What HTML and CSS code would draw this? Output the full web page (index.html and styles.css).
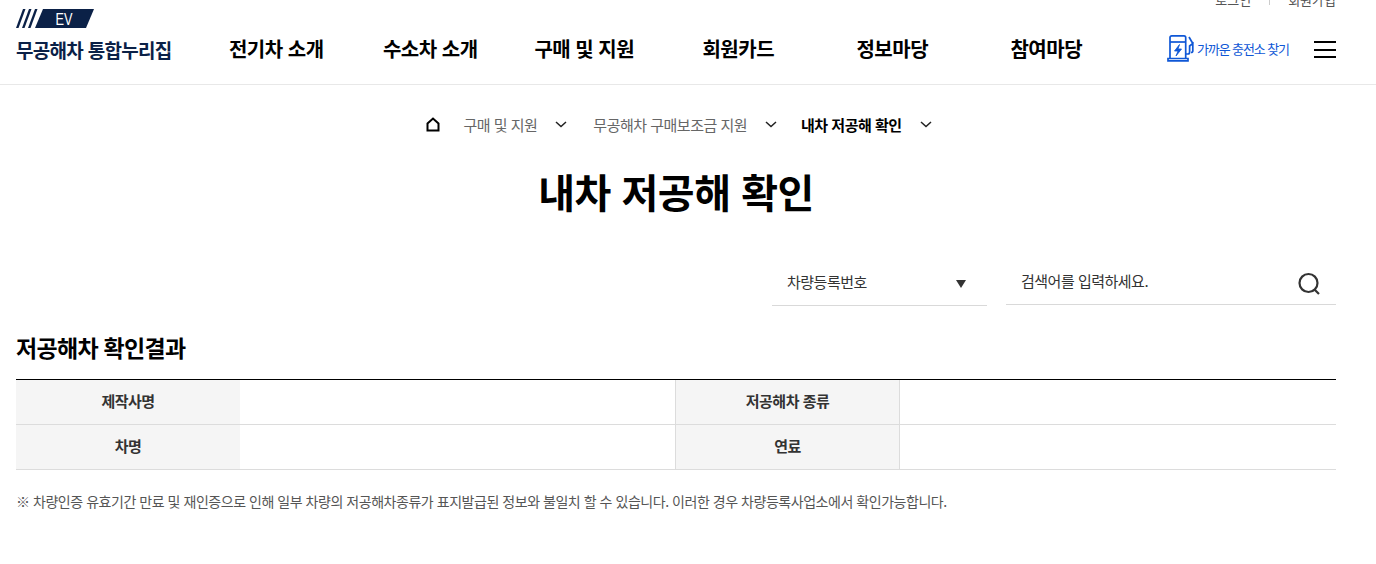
FILE: index.html
```html
<!DOCTYPE html>
<html lang="ko">
  <head>
    <meta charset="UTF-8">
    <meta name="viewport" content="width=device-width, initial-scale=1.0">
    <title>내차 저공해 확인</title>
    <link rel="stylesheet" href="styles.css">
  </head>
  <body>
    <header class="header">
      <div class="util">
        <a class="util-link">로그인</a>
        <span class="util-bar"></span>
        <a class="util-link">회원가입</a>
      </div>
      <div class="header-row">
        <a class="logo">
          <svg class="logo-mark" width="78" height="19" viewBox="0 0 78 19">
            <polygon points="0,19 7,0 9.5,0 2.5,19" fill="#0b2147"/>
            <polygon points="6,19 13,0 15.5,0 8.5,19" fill="#0b2147"/>
            <polygon points="12,19 19,0 21.5,0 14.5,19" fill="#0b2147"/>
            <polygon points="19,19 27,0 78,0 70,19" fill="#0b2147"/>
            <text x="39.5" y="15.5" class="logo-ev" textLength="17" lengthAdjust="spacingAndGlyphs">EV</text>
          </svg>
          <span class="logo-name">무공해차 통합누리집</span>
        </a>
        <nav class="gnb">
          <a class="gnb-item">전기차 소개</a>
          <a class="gnb-item">수소차 소개</a>
          <a class="gnb-item">구매 및 지원</a>
          <a class="gnb-item">회원카드</a>
          <a class="gnb-item">정보마당</a>
          <a class="gnb-item">참여마당</a>
        </nav>
        <a class="find">
          <svg class="find-icon" width="28" height="28" viewBox="0 0 28 28" fill="none" stroke="#0f57d6" stroke-width="1.7">
            <path d="M3 25V3.5C3 2.5 3.7 1.8 4.7 1.8H17C18 1.8 18.7 2.5 18.7 3.5V25"/>
            <path d="M1 26.8H21V24.5H1Z"/>
            <path d="M3 8H18.7"/>
            <path d="M12.5 10.5L7.5 17H11L9 22L14.5 15H11Z" fill="#0f57d6" stroke-width="0.8"/>
            <path d="M18.7 20H21C22 20 22.6 19 22.6 18V12L25.8 9.5V17C25.8 18 25 18.5 24 18.5"/>
            <path d="M22 3L25.8 9.5"/>
          </svg>
          <span class="find-text">가까운 충전소 찾기</span>
        </a>
        <button class="menu-btn"><span></span><span></span><span></span></button>
      </div>
    </header>

    <main class="content">
      <div class="crumbs">
        <svg class="crumb-home" width="14" height="15" viewBox="0 0 14 15" fill="none" stroke="#000" stroke-width="2">
          <path d="M1.5 13.5H12.5V6.5L7 1.5L1.5 6.5Z"/>
        </svg>
        <span class="crumb">구매 및 지원</span>
        <svg class="crumb-arrow" width="12" height="7" viewBox="0 0 12 7" fill="none" stroke="#222" stroke-width="1.5"><path d="M1 1L6 5.5L11 1"/></svg>
        <span class="crumb">무공해차 구매보조금 지원</span>
        <svg class="crumb-arrow" width="12" height="7" viewBox="0 0 12 7" fill="none" stroke="#222" stroke-width="1.5"><path d="M1 1L6 5.5L11 1"/></svg>
        <span class="crumb crumb-now">내차 저공해 확인</span>
        <svg class="crumb-arrow" width="12" height="7" viewBox="0 0 12 7" fill="none" stroke="#222" stroke-width="1.5"><path d="M1 1L6 5.5L11 1"/></svg>
      </div>

      <h1 class="page-title">내차 저공해 확인</h1>

      <div class="search">
        <div class="search-type">
          <span>차량등록번호</span>
          <i class="search-caret"></i>
        </div>
        <div class="search-box">
          <span>검색어를 입력하세요.</span>
          <svg class="search-icon" width="24" height="24" viewBox="0 0 24 24" fill="none" stroke="#333" stroke-width="2.2">
            <circle cx="11.5" cy="11" r="9"/>
            <path d="M17.5 17.5L22 22"/>
          </svg>
        </div>
      </div>

      <h2 class="result-title">저공해차 확인결과</h2>

      <div class="result-wrap">
        <table class="result">
          <tr>
            <th>제작사명</th>
            <td class="td-first"></td>
            <th class="th-mid">저공해차 종류</th>
            <td></td>
          </tr>
          <tr>
            <th>차명</th>
            <td></td>
            <th class="th-mid">연료</th>
            <td></td>
          </tr>
        </table>
      </div>

      <p class="note">※ 차량인증 유효기간 만료 및 재인증으로 인해 일부 차량의 저공해차종류가 표지발급된 정보와 불일치 할 수 있습니다. 이러한 경우 차량등록사업소에서 확인가능합니다.</p>
    </main>
  </body>
</html>
```

FILE: styles.css
```css
body {
    margin: 0;
    background-color: #fff;
    color: #000;
    font-family: "Noto Sans CJK KR", "Noto Sans", sans-serif;
    letter-spacing: -0.5px;
}

.header {
    height: 84px;
    border-bottom: 1px solid #e8e8e8;
    overflow: hidden;
}

.util {
    display: flex;
    justify-content: flex-end;
    align-items: center;
    gap: 18px;
    height: 18px;
    margin-top: -10px;
    padding-right: 40px;
    font-size: 13px;
    letter-spacing: 0;
    color: #555;
}

.util-bar {
    width: 1px;
    height: 11px;
    background-color: #ccc;
}

.header-row {
    display: flex;
    align-items: flex-start;
    padding-left: 16px;
    padding-top: 1px;
}

.logo {
    display: block;
    width: 183px;
}

.logo-mark {
    display: block;
}

.logo-ev {
    font-family: "Liberation Sans", sans-serif;
    font-size: 17px;
    letter-spacing: 0;
    fill: #fff;
}

.logo-name {
    display: block;
    margin-top: 8px;
    font-size: 19px;
    line-height: 27px;
    font-weight: 700;
    letter-spacing: -0.7px;
    white-space: nowrap;
    color: #0b2147;
}

.gnb {
    display: flex;
    width: 924px;
    padding-top: 21px;
}

.gnb-item {
    width: 154px;
    padding-left: 0.5px;
    text-align: center;
    font-size: 20px;
    line-height: 38px;
    font-weight: 700;
    white-space: nowrap;
}

.find {
    display: flex;
    align-items: center;
    gap: 2px;
    margin-left: 44px;
    padding-top: 25px;
}

.find-text {
    font-size: 13px;
    letter-spacing: -1.1px;
    white-space: nowrap;
    color: #0f57d6;
}

.menu-btn {
    display: flex;
    flex-direction: column;
    gap: 5.5px;
    width: 22px;
    margin-left: 25px;
    margin-top: 32px;
    padding: 0;
    background: none;
    border: none;
}

.menu-btn span {
    width: 22px;
    height: 2px;
    background-color: #000;
}

.content {
    padding: 0 40px 0 16px;
}

.crumbs {
    display: flex;
    justify-content: center;
    align-items: center;
    height: 78px;
    padding-left: 32px;
    font-size: 15px;
    color: #666;
}

.crumb-home {
    margin-right: 23px;
}

.crumb-arrow {
    margin: 0 26px 0 18px;
}

.crumb-now {
    margin-left: -2px;
    font-weight: 700;
    color: #000;
}

.page-title {
    margin: 0;
    height: 101px;
    font-size: 40px;
    line-height: 56px;
    font-weight: 700;
    text-align: center;
}

.search {
    display: flex;
    justify-content: flex-end;
    align-items: flex-end;
    gap: 19px;
    font-size: 15px;
    color: #333;
}

.search-type {
    display: flex;
    justify-content: space-between;
    align-items: center;
    width: 179px;
    height: 34px;
    padding: 0 21px 7px 15px;
    border-bottom: 1px solid #d9d9d9;
}

.search-caret {
    width: 0;
    height: 0;
    margin-top: 6px;
    border-left: 5px solid transparent;
    border-right: 5px solid transparent;
    border-top: 8px solid #333;
}

.search-box {
    display: flex;
    justify-content: space-between;
    align-items: center;
    width: 300px;
    height: 33px;
    margin-bottom: 1px;
    padding: 0 15px 7px;
    border-bottom: 1px solid #d9d9d9;
}

.search-icon {
    margin-top: 7px;
}

.result-title {
    margin: 25px 0 0;
    height: 48px;
    font-size: 23px;
    line-height: 32px;
    font-weight: 700;
    letter-spacing: -0.7px;
}

.result-wrap {
    width: 1320px;
    border-top: 1px solid #000;
}

.result {
    width: 100%;
    border-collapse: collapse;
    table-layout: fixed;
    font-size: 15px;
}

.result th {
    width: 224px;
    height: 41px;
    padding: 0 0 3px;
    background-color: #f5f5f5;
    border-bottom: 1px solid #dcdcdc;
    color: #333;
    font-weight: 700;
}

.result th.th-mid {
    width: 223px;
    border-left: 1px solid #dcdcdc;
    border-right: 1px solid #dcdcdc;
}

.result td {
    padding: 0;
    border-bottom: 1px solid #dcdcdc;
}

.result td.td-first {
    width: 435px;
}

.note {
    margin: 21px 0 0;
    font-size: 14px;
    line-height: 20px;
    letter-spacing: -0.46px;
    color: #555;
}
```
